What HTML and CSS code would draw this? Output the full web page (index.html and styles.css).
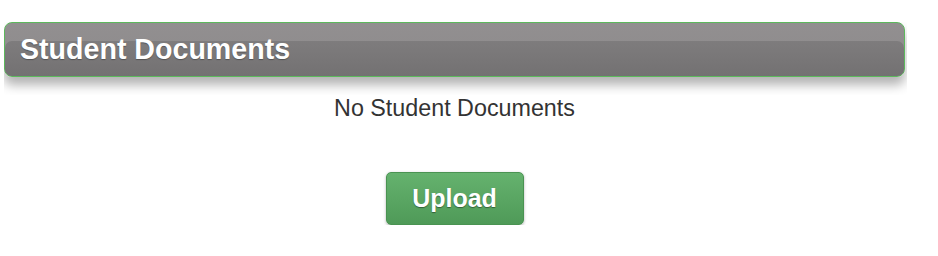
FILE: index.html
```html
<!DOCTYPE html>
<html lang="en">
<head>
<meta charset="utf-8">
<title>Student Documents</title>
<link rel="stylesheet" href="styles.css">
</head>
<body>
<div class="page">
  <div class="panel-wrap">
    <div class="panel-header">
      <h2 class="panel-title">Student Documents</h2>
    </div>
  </div>
  <p class="empty-msg">No Student Documents</p>
  <button class="upload-btn" type="button">Upload</button>
</div>
</body>
</html>
```

FILE: styles.css
```css
html, body {
  margin: 0;
  padding: 0;
  background: #ffffff;
}

body {
  font-family: "Liberation Sans", Arial, Helvetica, sans-serif;
  color: #333333;
}

.page {
  width: 901px;
  margin-left: 4px;
  padding-top: 22px;
}

.panel-wrap {
  width: 903px;
  overflow: hidden;
  padding-bottom: 18px;
}

.panel-header {
  position: relative;
  box-sizing: border-box;
  width: 901px;
  height: 55px;
  border: 1px solid #5cb85c;
  border-radius: 8px;
  background: linear-gradient(#928f90, #8c8a8b);
  box-shadow: 0 8px 11px rgba(0, 0, 0, 0.3);
  display: flex;
  align-items: center;
}

.panel-header::before {
  content: "";
  position: absolute;
  left: 0;
  right: 0;
  top: 18px;
  bottom: 0;
  border-radius: 7px;
  background: linear-gradient(#7e7c7d, #737172);
}

.panel-title {
  position: relative;
  margin: 0;
  padding-left: 15px;
  font-size: 28.6px;
  line-height: 53px;
  font-weight: bold;
  color: #ffffff;
  text-shadow: 0 1px 1px rgba(0, 0, 0, 0.3);
}

.empty-msg {
  margin: 0;
  font-size: 23.3px;
  line-height: 1.2;
  text-align: center;
  color: #333333;
}

.upload-btn {
  display: flex;
  align-items: center;
  justify-content: center;
  box-sizing: border-box;
  width: 138px;
  height: 53px;
  margin: 49px auto 0;
  padding: 0;
  border: 1px solid #4a9352;
  border-radius: 5px;
  background: linear-gradient(#65b26e, #4f9a58);
  box-shadow: 0 1px 3px rgba(0, 0, 0, 0.3);
  font-family: "Liberation Sans", Arial, Helvetica, sans-serif;
  font-size: 25px;
  line-height: 51px;
  font-weight: bold;
  color: #ffffff;
  text-shadow: 0 1px 1px rgba(0, 0, 0, 0.4);
}
```
